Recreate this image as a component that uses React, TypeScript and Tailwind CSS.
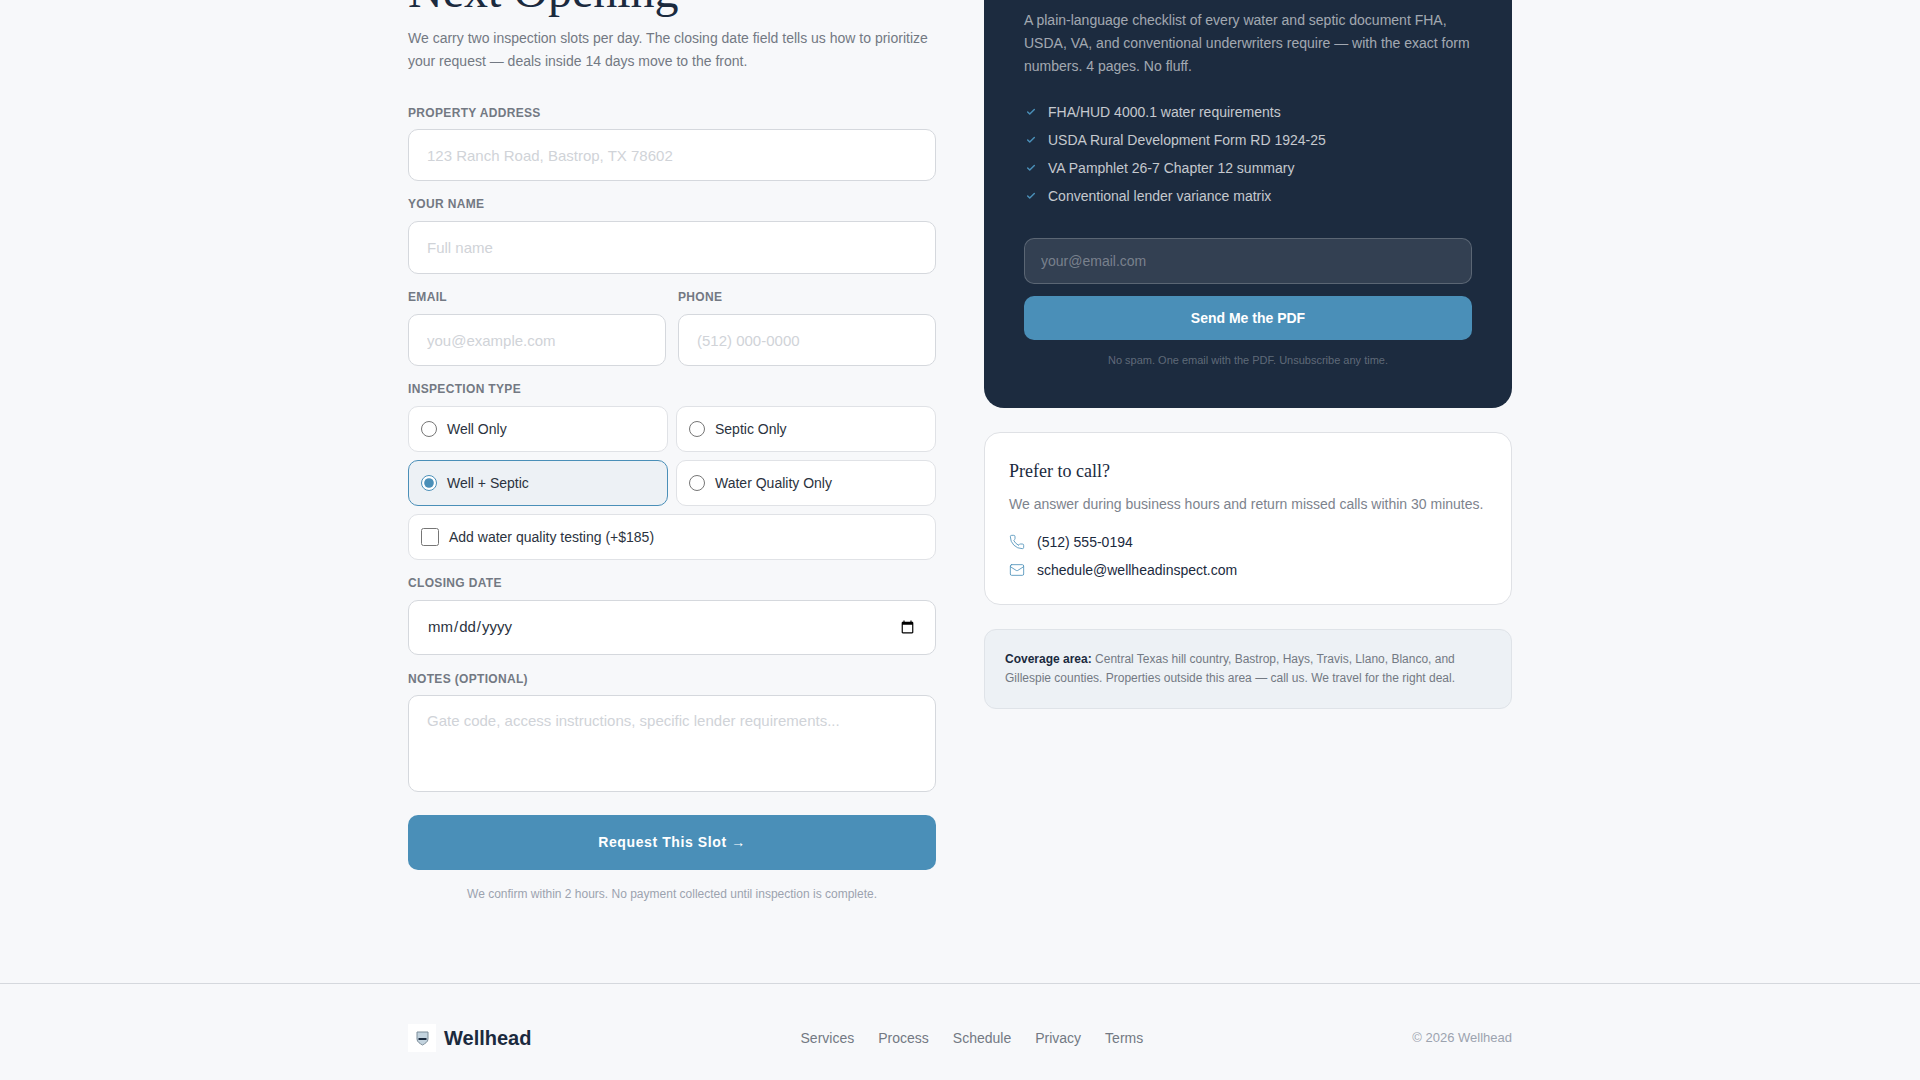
import { Mail, Phone, Check } from "lucide-react";

const sans = "font-['Liberation_Sans',Arial,sans-serif]";
const serif = "font-['Liberation_Serif','Times_New_Roman',serif]";

const labelBase =
  "block text-[12px] leading-[16px] font-bold uppercase tracking-[0.33px] text-[#737983]";
const labelClass = `${labelBase} mb-[9px]`;
const inputClass =
  "block w-full h-[52.5px] px-[18px] bg-white border border-[#d5d8dd] rounded-[10px] text-[15px] text-[#2b3340] placeholder:text-[#d0d3d8] outline-none";

const checklist = [
  "FHA/HUD 4000.1 water requirements",
  "USDA Rural Development Form RD 1924-25",
  "VA Pamphlet 26-7 Chapter 12 summary",
  "Conventional lender variance matrix",
];

const footerLinks = ["Services", "Process", "Schedule", "Privacy", "Terms"];

function Radio({ label, checked }: { label: string; checked?: boolean }) {
  return (
    <label
      className={`flex items-center gap-[10px] h-[46px] px-[12px] rounded-[10px] border text-[14px] text-[#2b3340] ${
        checked ? "bg-[#edf1f5] border-[#4a8fb8]" : "bg-white border-[#e0e2e6]"
      }`}
    >
      <input
        type="radio"
        name="inspection"
        defaultChecked={checked}
        className="w-[16px] h-[16px] m-0 accent-[#4a8fb8]"
      />
      {label}
    </label>
  );
}

export default function App() {
  return (
    <div className={`h-screen overflow-hidden bg-[#f7f8fa] flex flex-col ${sans}`}>
      <main className="w-[1104px] mx-auto grid grid-cols-2 gap-[48px] items-start h-[983px] shrink-0">
        {/* form */}
        <section>
          <h2 className={`-mt-[35px] text-[48px] leading-[52px] font-normal text-[#1b2a3e] ${serif}`}>
            Next Opening
          </h2>
          <p className="mt-[10px] text-[14px] leading-[23px] text-[#737983]">
            We carry two inspection slots per day. The closing date field tells us how to prioritize
            <br />
            your request — deals inside 14 days move to the front.
          </p>

          <div className="mt-[32px]">
            <label className={`${labelBase} mb-[7.9px]`}>Property Address</label>
            <input className={inputClass} placeholder="123 Ranch Road, Bastrop, TX 78602" />
          </div>
          <div className="mt-[15px]">
            <label className={labelClass}>Your Name</label>
            <input className={inputClass} placeholder="Full name" />
          </div>
          <div className="mt-[15px] grid grid-cols-2 gap-[12px]">
            <div>
              <label className={labelClass}>Email</label>
              <input className={inputClass} placeholder="you@example.com" />
            </div>
            <div>
              <label className={labelClass}>Phone</label>
              <input className={inputClass} placeholder="(512) 000-0000" />
            </div>
          </div>

          <div className="mt-[15px]">
            <label className={labelClass}>Inspection Type</label>
            <div className="grid grid-cols-2 gap-[8px]">
              <Radio label="Well Only" />
              <Radio label="Septic Only" />
              <Radio label="Well + Septic" checked />
              <Radio label="Water Quality Only" />
            </div>
            <label className="mt-[8px] flex items-center gap-[10px] h-[46px] px-[12px] bg-white border border-[#e0e2e6] rounded-[10px] text-[14px] text-[#2b3340]">
              <input type="checkbox" className="w-[18px] h-[18px] m-0 accent-[#4a8fb8]" />
              Add water quality testing (+$185)
            </label>
          </div>

          <div className="mt-[15px]">
            <label className={labelClass}>Closing Date</label>
            <input type="date" className={`${inputClass} h-[54.5px]`} />
          </div>
          <div className="mt-[16px]">
            <label className={`${labelBase} mb-[8px]`}>Notes (optional)</label>
            <textarea
              className="block w-full h-[97px] px-[18px] py-[15px] bg-white border border-[#d5d8dd] rounded-[10px] text-[15px] leading-[20px] placeholder:text-[#d0d3d8] outline-none resize-none"
              placeholder="Gate code, access instructions, specific lender requirements..."
            />
          </div>

          <button className="mt-[23.5px] w-full h-[55px] bg-[#4a8fb8] rounded-[10px] text-[14px] font-bold tracking-[0.6px] text-white">
            Request This Slot →
          </button>
          <p className="mt-[16px] text-center text-[12px] leading-[16px] text-[#9ca3af]">
            We confirm within 2 hours. No payment collected until inspection is complete.
          </p>
        </section>

        {/* sidebar */}
        <aside className="flex flex-col gap-[24px]">
          <div className="bg-[#1c2b3f] rounded-b-[20px] px-[40px] pb-[40px] pt-[9px]">
            <p className="text-[14px] leading-[23px] text-white/60">
              A plain-language checklist of every water and septic document FHA,
              <br />
              USDA, VA, and conventional underwriters require — with the exact form
              <br />
              numbers. 4 pages. No fluff.
            </p>
            <ul className="mt-[24px] flex flex-col gap-[8px]">
              {checklist.map((item) => (
                <li key={item} className="flex items-center gap-[12px] h-[20px] text-[14px] text-white/75">
                  <Check size={10} strokeWidth={3.5} className="ml-[2px] text-[#4a8fb8]" />
                  {item}
                </li>
              ))}
            </ul>
            <input
              className="block mt-[32px] w-full h-[46px] px-[16px] bg-white/10 border border-white/20 rounded-[10px] text-[14px] text-white placeholder:text-white/35 outline-none"
              placeholder="your@email.com"
            />
            <button className="block mt-[12px] w-full h-[44px] bg-[#4a8fb8] rounded-[10px] text-[14px] font-bold text-white">
              Send Me the PDF
            </button>
            <p className="mt-[12px] text-center text-[11px] leading-[16px] text-white/30">
              No spam. One email with the PDF. Unsubscribe any time.
            </p>
          </div>

          <div className="bg-white border border-[#dfe1e5] rounded-[16px] p-[24px]">
            <h3 className={`text-[18px] leading-[28px] font-normal text-[#1b2a3e] ${serif}`}>Prefer to call?</h3>
            <p className="mt-[9px] text-[14px] leading-[20px] text-[#7d838d]">
              We answer during business hours and return missed calls within 30 minutes.
            </p>
            <div className="mt-[18px] flex items-center gap-[12px] h-[20px] text-[14px] text-[#1b2a3e]">
              <Phone size={16} strokeWidth={1.25} className="text-[#4a8fb8]" />
              (512) 555-0194
            </div>
            <div className="mt-[8px] flex items-center gap-[12px] h-[20px] text-[14px] text-[#1b2a3e]">
              <Mail size={16} strokeWidth={1.25} className="text-[#4a8fb8]" />
              schedule@wellheadinspect.com
            </div>
          </div>

          <div className="bg-[#edf1f5] border border-[#dfe3e8] rounded-[12px] px-[20px] py-[20px] text-[12px] leading-[19px] text-[#737983]">
            <strong className="font-bold text-[#1b2a3e]">Coverage area:</strong> Central Texas hill country, Bastrop,
            Hays, Travis, Llano, Blanco, and Gillespie counties. Properties outside this area — call us. We travel for
            the right deal.
          </div>
        </aside>
      </main>

      <footer className="border-t border-[#d5d8dd] grow">
        <div className="w-[1104px] mx-auto h-[108px] flex items-center justify-between">
          <div className="flex items-center gap-[8px]">
            <div className="w-[28px] h-[28px] bg-white flex items-center justify-center">
              <svg width="13" height="16" viewBox="0 0 13 16">
                <path d="M1 2h11v7c0 3-3 4.500-5.500 6C4 13.500 1 12 1 9z" fill="#c3d3de" stroke="#7d8d99" strokeWidth="1" />
                <rect x="2.500" y="8" width="8" height="2" fill="#1b2a3e" />
              </svg>
            </div>
            <span className="text-[20px] leading-[28px] font-bold text-[#1b2a3e]">Wellhead</span>
          </div>
          <nav className="flex gap-[24px] text-[14px] text-[#737983]">
            {footerLinks.map((link) => (
              <a key={link} href="#">
                {link}
              </a>
            ))}
          </nav>
          <span className="text-[13px] text-[#9ca3af]">© 2026 Wellhead</span>
        </div>
      </footer>
    </div>
  );
}
